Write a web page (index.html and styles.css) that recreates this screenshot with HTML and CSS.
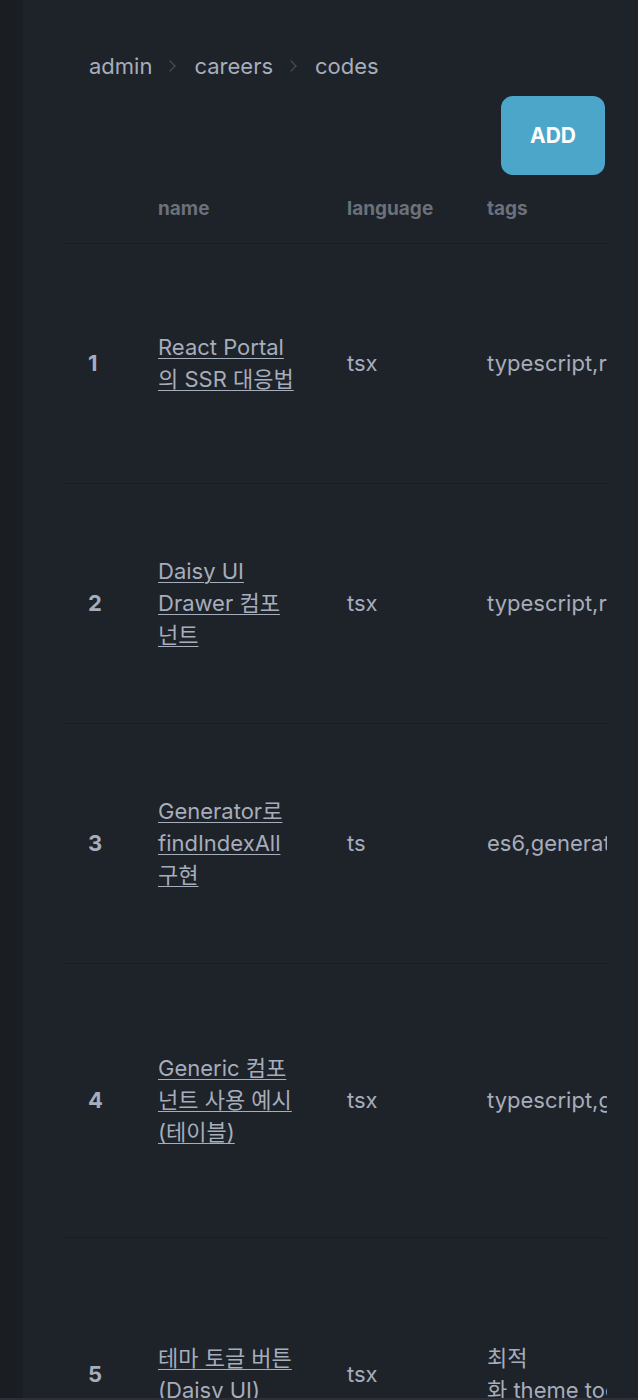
FILE: index.html
```html
<!DOCTYPE html>
<html lang="ko">
<head>
<meta charset="utf-8">
<title>codes</title>
<link rel="stylesheet" href="styles.css">
</head>
<body>
<div class="layout">
  <aside class="side"></aside>
  <main class="main">
    <nav class="crumbs">
      <span class="crumb">admin</span>
      <span class="sep"></span>
      <span class="crumb">careers</span>
      <span class="sep"></span>
      <span class="crumb">codes</span>
    </nav>
    <div class="actions">
      <button class="btn-add">ADD</button>
    </div>
    <div class="table-wrap">
      <table class="tbl">
        <colgroup>
          <col class="c-idx"><col class="c-name"><col class="c-lang"><col class="c-tags">
        </colgroup>
        <thead>
          <tr class="head"><th></th><th>name</th><th>language</th><th>tags</th></tr>
        </thead>
        <tbody>
          <tr class="r1"><td class="idx">1</td><td class="name"><a href="#">React Portal<br>의 SSR 대응법</a></td><td>tsx</td><td class="tags">typescript,react,nextjs</td></tr>
          <tr class="r2"><td class="idx">2</td><td class="name"><a href="#">Daisy UI<br>Drawer 컴포<br>넌트</a></td><td>tsx</td><td class="tags">typescript,react,daisyui</td></tr>
          <tr class="r3"><td class="idx">3</td><td class="name"><a href="#">Generator로<br>findIndexAll<br>구현</a></td><td>ts</td><td class="tags">es6,generator,typescript</td></tr>
          <tr class="r4"><td class="idx">4</td><td class="name"><a href="#">Generic 컴포<br>넌트 사용 예시<br>(테이블)</a></td><td>tsx</td><td class="tags">typescript,generic,react</td></tr>
          <tr class="r5"><td class="idx">5</td><td class="name"><a href="#">테마 토글 버튼<br>(Daisy UI)</a></td><td>tsx</td><td class="tags">최적<br>화 theme toggle</td></tr>
        </tbody>
      </table>
    </div>
  </main>
</div>
<div class="bottom-edge"></div>
</body>
</html>
```
FILE: styles.css
```css
* { box-sizing: border-box; }
html, body { margin: 0; padding: 0; }
body {
  background: #1e2229;
  color: #a6adbb;
  font-family: Inter, "Noto Sans CJK KR", sans-serif;
  font-size: 22px;
  overflow: hidden;
}
.layout {
  display: flex;
  min-height: 1400px;
}
.side {
  width: 23px;
  flex: none;
  background: #1a1d22;
}
.main {
  flex: 1;
  min-width: 0;
  padding: 50px 31px 0 41px;
}
.crumbs {
  display: flex;
  align-items: center;
  height: 32px;
  padding-left: 25px;
  line-height: 32px;
}
.crumb { color: #a6adbb; }
.sep {
  display: inline-block;
  width: 8px;
  height: 8px;
  border-top: 1.5px solid #a6adbb;
  border-right: 1.5px solid #a6adbb;
  transform: rotate(45deg);
  opacity: 0.35;
  margin: 0 20px 0 14px;
}
.actions {
  display: flex;
  justify-content: flex-end;
  padding-top: 14px;
  padding-right: 2px;
}
.btn-add {
  width: 104px;
  height: 79px;
  border: none;
  border-radius: 12px;
  background: #4ba6c9;
  color: #ffffff;
  font-family: Inter, sans-serif;
  font-weight: 700;
  font-size: 21px;
  cursor: pointer;
}
.table-wrap {
  overflow: hidden;
  width: 100%;
}
.tbl {
  border-collapse: collapse;
  table-layout: fixed;
  width: 900px;
}
.c-idx { width: 70px; }
.c-name { width: 189px; }
.c-lang { width: 140px; }
.c-tags { width: 501px; }
.tbl th, .tbl td {
  padding: 0 24px;
  text-align: left;
  vertical-align: middle;
  line-height: 32px;
  white-space: nowrap;
}
.tbl th {
  font-size: 19px;
  font-weight: 700;
  color: #6b717b;
}
.head { height: 68px; }
.tbl tr { border-bottom: 1px solid #191c22; }
.r1, .r2, .r3 { height: 240px; }
.r4, .r5 { height: 274px; }
.idx { font-weight: 700; }
.name a {
  color: #a6adbb;
  text-decoration: underline;
  text-underline-offset: 3px;
  text-decoration-thickness: 1px;
}
.bottom-edge {
  position: fixed;
  left: 0;
  right: 0;
  bottom: 0;
  height: 2px;
  background: #2c2f35;
}
```
